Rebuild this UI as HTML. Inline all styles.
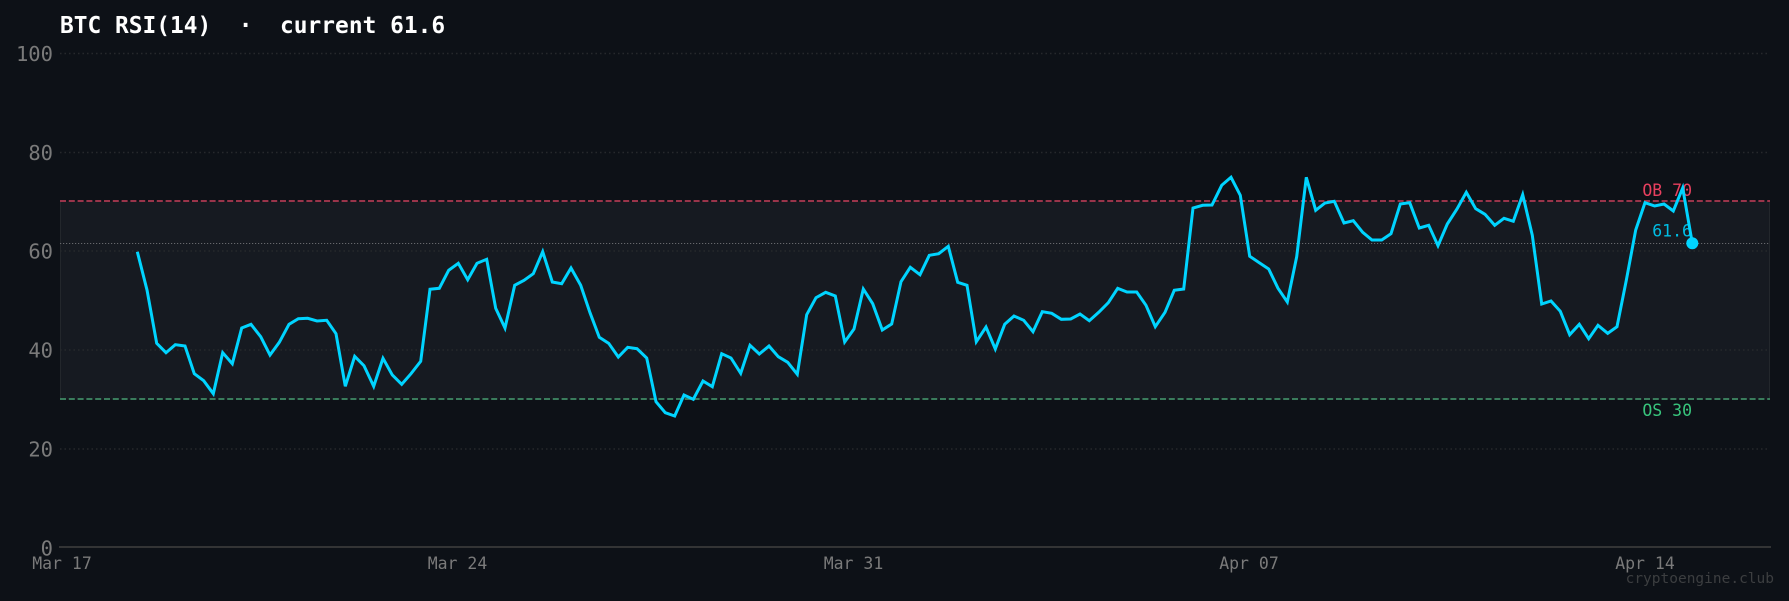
<!DOCTYPE html>
<html><head><meta charset="utf-8"><style>
html,body{margin:0;padding:0;background:#0d1117;width:1789px;height:601px;overflow:hidden}
svg{display:block}
text{font-family:"DejaVu Sans Mono","Liberation Mono",monospace}
</style></head><body>
<svg width="1789" height="601" viewBox="0 0 1789 601" xmlns="http://www.w3.org/2000/svg">
<rect width="1789" height="601" fill="#0d1117"/>
<rect x="60" y="201.5" width="1710" height="198" fill="#161a21"/>
<path d="M60.500 201.500V399.500M1769.500 201.500V399.500" stroke="#23272c" stroke-width="1" fill="none"/>
<g stroke="#26292c" stroke-width="1.5" stroke-dasharray="1.5 3" fill="none">
<path d="M60 53.500H1770M60 152.500H1770M60 251H1770M60 350H1770M60 449H1770"/>
</g>
<path d="M60 243.500H1770" stroke="#66686c" stroke-width="1" stroke-dasharray="1.200 1.800" fill="none"/>
<path d="M60 201H1770" stroke="#99344a" stroke-width="2" stroke-dasharray="6 2.800" fill="none"/>
<path d="M60 399H1770" stroke="#3a7c5c" stroke-width="2" stroke-dasharray="6 2.800" fill="none"/>
<path d="M59 547H1771" stroke="#333435" stroke-width="2" fill="none"/>
<text x="60" y="33" font-size="22.850" font-weight="700" fill="#ffffff" xml:space="preserve">BTC RSI(14)  ·  current 61.6</text>
<g font-size="20.500" fill="#7a7a7a" text-anchor="end">
<text x="53" y="61">100</text>
<text x="53" y="160">80</text>
<text x="53" y="258.500">60</text>
<text x="53" y="357.500">40</text>
<text x="53" y="456.500">20</text>
<text x="53" y="555.500">0</text>
</g>
<g font-size="16.500" fill="#7a7a7a" text-anchor="middle">
<text x="62" y="569">Mar 17</text>
<text x="457.500" y="569">Mar 24</text>
<text x="853.500" y="569">Mar 31</text>
<text x="1249" y="569">Apr 07</text>
<text x="1645" y="569">Apr 14</text>
</g>
<text x="1692" y="196" font-size="16.500" fill="#e8405f" text-anchor="end">OB 70</text>
<text x="1692" y="416" font-size="16.500" fill="#38c47c" text-anchor="end">OS 30</text>
<text x="1692" y="236.500" font-size="16.500" fill="#00bde4" text-anchor="end">61.6</text>
<text x="1774" y="583" font-size="14.500" fill="#3c3e40" text-anchor="end">cryptoengine.club</text>
<polyline fill="none" stroke="#00d4ff" stroke-width="3" stroke-linejoin="miter" points="137.3,251.7 147,290 156.7,343.3 166,352.7 175.3,344.7 185,346 194.3,373.7 203.7,380.7 213.3,393.7 222.7,352.7 232.3,363.7 241.7,328 251,324.3 260.7,336.7 270,355 279.3,342.3 289,324.3 298.3,318.7 307.7,318.3 317,321 326.7,320.3 336,333.7 345.3,386.3 354.7,356.3 364,365.7 373.7,386.3 383,358.3 392.3,375 401.7,384.3 411,373.7 420.7,361.3 430,289.3 439.3,288.3 448.7,270.3 458.3,263.3 467.7,279.7 477,263.3 486.7,259.3 495.7,308.3 505,328 514.7,285.3 524,280.3 533.3,273.7 542.7,251.7 552.3,282 561.7,283.7 571,268 580.7,285.3 590,312.7 599.3,337.3 608.7,343.3 618.3,357 627.7,347.3 637,348.7 646.7,358 656,401.7 665.3,412.7 674.7,416 684,395 693.3,399.3 703,381 712.3,386.7 721.7,353.7 731,358 740.7,373.3 750,345.3 759.3,354 769,346 778.3,356.7 787.7,362.3 797.3,374.3 806.7,314.7 816,297.7 825.7,292.3 835.3,296 844.7,342 854,329 863.3,289 872.7,303.7 882.3,330 891.7,324 901,281.7 910.3,267.3 920,274.7 929.3,255.3 938.7,253.7 948.3,246.3 957.7,282.3 967,285.3 976.3,341.7 986,327 995.3,349 1004.7,324.3 1014,316 1023.7,320.3 1033,331.7 1042.3,311.7 1051.7,313.3 1061.3,319.3 1070.7,319 1080,314 1089.3,320.7 1099,312 1108.3,302.7 1117.7,288.3 1127,292 1136.7,292 1146,305.3 1155.3,326.7 1165,312.3 1174.3,290.3 1183.7,289 1193,208 1202.7,205.3 1212,205 1221.7,185.3 1231,177.3 1240.3,195.3 1249.7,256.3 1259.3,262.7 1268.7,269 1278,288.3 1287.3,302 1296.7,256.7 1306.3,177.3 1315.7,210.3 1325,203 1334.3,201.3 1344,223 1353.3,220.7 1362.7,232.3 1372,240 1381.7,240 1391,233.7 1400.3,204 1409.7,202.7 1419.3,228 1428.7,225.3 1438,245.7 1447.3,224 1457,209 1466.3,192.3 1475.7,208.7 1485,214.3 1494.7,225.3 1504,218.3 1513.3,221.3 1522.7,194.7 1532.3,235.3 1541.7,304 1551,301 1560.3,311.3 1569.7,334.7 1579.3,324.3 1588.7,338.7 1598,325.3 1607.7,333.3 1617,326.7 1626.3,280.3 1635.7,230 1645,202.7 1654.7,206 1664,204 1673.3,211 1682.7,188 1692.3,243.3"/>
<circle cx="1692.300" cy="243.300" r="6" fill="#00d4ff"/>
</svg>
</body></html>
